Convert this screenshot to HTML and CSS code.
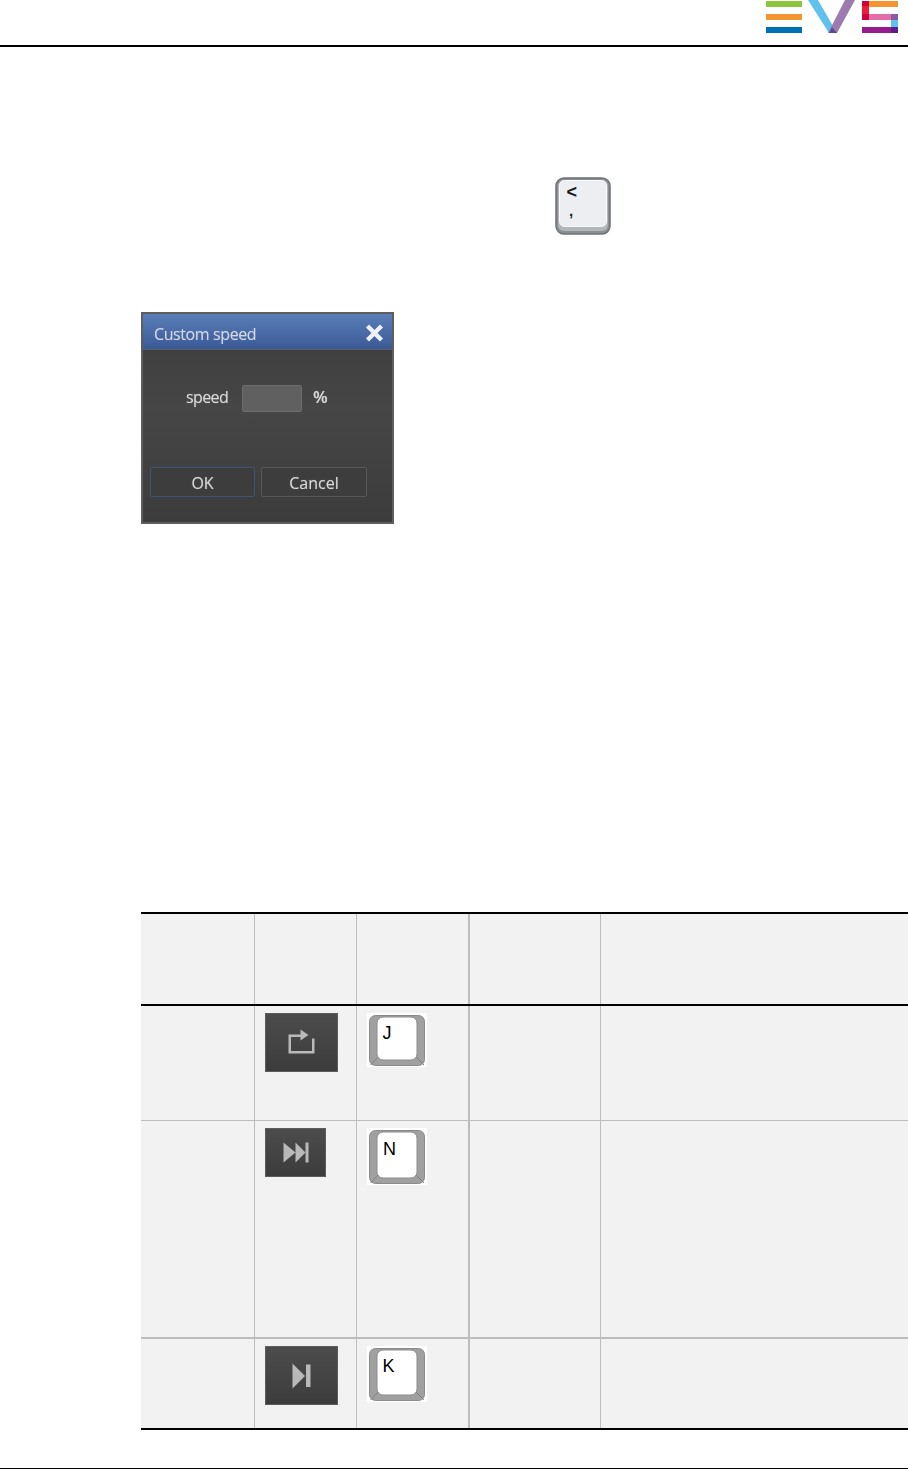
FILE: index.html
```html
<!DOCTYPE html>
<html lang="en">
<head>
<meta charset="utf-8">
<title>Custom speed</title>
<link rel="stylesheet" href="styles.css">
</head>
<body>
<header class="top">
  <svg class="logo" width="132" height="34" viewBox="0 0 132 34" aria-label="EVS">
    <rect x="0" y="1" width="36" height="6" fill="#8cc63f"/>
    <rect x="0" y="14" width="36" height="6" fill="#f39530"/>
    <rect x="0" y="27" width="36" height="6" fill="#006fb3"/>
    <path d="M42 0h10l19 33h-8z" fill="#5fc1ee"/>
    <path d="M79 0h10L71 33h-9z" fill="#9c7bb1"/>
    <path d="M66 27l5 6h-8z" fill="#5b4a93"/>
    <rect x="96" y="1" width="7" height="19" fill="#ee1c3c"/>
    <rect x="96" y="1" width="7" height="5" fill="#d2003c"/>
    <rect x="96" y="14" width="7" height="6" fill="#d2003c"/>
    <rect x="103" y="1" width="29" height="6" fill="#f39530"/>
    <rect x="103" y="14" width="22" height="6" fill="#e46fa8"/>
    <rect x="125" y="14" width="7" height="6" fill="#8a5ca0"/>
    <rect x="125" y="20" width="7" height="7" fill="#5fc1ee"/>
    <rect x="96" y="27" width="29" height="6" fill="#951b8f"/>
    <rect x="125" y="27" width="7" height="6" fill="#5b1f85"/>
  </svg>
</header>

<main class="page">
  <svg class="bigkey" width="56" height="58" viewBox="0 0 56 58">
    <rect x="1" y="1" width="54" height="56" rx="8" fill="#8b8f92" stroke="#6f7375" stroke-width="1.500"/>
    <rect x="3" y="3" width="50" height="51" rx="6" fill="#b4b7b9"/>
    <rect x="4.500" y="3.500" width="47" height="46" rx="5" fill="#eceef2" stroke="#f8f9fa"/>
    <text class="bigkey-lt" x="11.500" y="21">&lt;</text>
    <text class="bigkey-comma" x="14" y="39">,</text>
  </svg>

  <section class="dialog">
    <div class="dialog-title">
      <span class="dialog-name">Custom speed</span>
      <svg class="dialog-x" width="19" height="18" viewBox="0 0 19 18"><path d="M2.500 2l14 14M16.500 2l-14 14" stroke="#eef1f5" stroke-width="4.400" fill="none"/></svg>
    </div>
    <div class="dialog-body">
      <div class="field">
        <span class="field-label">speed</span>
        <span class="field-input"></span>
        <span class="field-unit">%</span>
      </div>
      <div class="actions">
        <span class="btn btn-ok"><span class="btn-text">OK</span></span>
        <span class="btn"><span class="btn-text">Cancel</span></span>
      </div>
    </div>
  </section>

  <section class="table">
    <div class="row row-head">
      <div class="cell"></div><div class="cell"></div><div class="cell cell-thick"></div><div class="cell"></div><div class="cell cell-last"></div>
    </div>
    <div class="row row-one">
      <div class="cell"></div>
      <div class="cell"><span class="tool tool-wide">
        <svg width="30" height="30" viewBox="0 0 30 30"><path d="M14 7.750H2.750v16.500h23.500V10.500" fill="none" stroke="#b9b9b9" stroke-width="2.500"/><path d="M13.500 1.500l8 5.500-8 5.500z" fill="#b9b9b9"/></svg>
      </span></div>
      <div class="cell cell-thick cell-key">
        <svg class="key" width="60" height="54" viewBox="0 0 60 54">
          <rect width="60" height="54" fill="#fff"/>
          <rect x="2.500" y="2.500" width="55" height="50" rx="6" fill="#a0a0a0" stroke="#8a8a8a"/>
          <path d="M12 43L3.500 52M48 43l9 9" stroke="#808080"/>
          <rect x="10" y="4" width="40" height="43" rx="6" fill="#fff" stroke="#8c8c8c"/>
          <text class="key-text" x="15.500" y="26">J</text>
        </svg>
      </div>
      <div class="cell"></div><div class="cell cell-last"></div>
    </div>
    <div class="row row-two">
      <div class="cell"></div>
      <div class="cell"><span class="tool tool-narrow">
        <svg width="30" height="24" viewBox="0 0 30 24"><path d="M2.500 1.500L14.500 11.500 2.500 21.500zM14.500 1.500L24.500 11.500 14.500 21.500z" fill="#b9b9b9"/><rect x="24.500" y="1.500" width="3" height="20" fill="#b9b9b9"/></svg>
      </span></div>
      <div class="cell cell-thick cell-key">
        <svg class="key" width="60" height="57" viewBox="0 0 60 57">
          <rect width="60" height="57" fill="#fff"/>
          <rect x="2.500" y="2.500" width="55" height="53" rx="6" fill="#a0a0a0" stroke="#8a8a8a"/>
          <path d="M12 46L3.500 55M48 46l9 9" stroke="#808080"/>
          <rect x="10" y="4" width="40" height="46" rx="6" fill="#fff" stroke="#8c8c8c"/>
          <text class="key-text" x="16" y="27">N</text>
        </svg>
      </div>
      <div class="cell"></div><div class="cell cell-last"></div>
    </div>
    <div class="row row-three">
      <div class="cell"></div>
      <div class="cell"><span class="tool tool-wide">
        <svg width="30" height="30" viewBox="0 0 30 30"><path d="M5.500 2.500L18 15 5.500 27.500z" fill="#b9b9b9"/><rect x="19" y="3.500" width="4.500" height="22.500" fill="#b9b9b9"/></svg>
      </span></div>
      <div class="cell cell-thick cell-key">
        <svg class="key" width="60" height="56" viewBox="0 0 60 56">
          <rect width="60" height="56" fill="#fff"/>
          <rect x="2.500" y="2.500" width="55" height="52" rx="6" fill="#a0a0a0" stroke="#8a8a8a"/>
          <path d="M12 45L3.500 54M48 45l9 9" stroke="#808080"/>
          <rect x="10" y="4" width="40" height="45" rx="6" fill="#fff" stroke="#8c8c8c"/>
          <text class="key-text" x="15.500" y="26">K</text>
        </svg>
      </div>
      <div class="cell"></div><div class="cell cell-last"></div>
    </div>
  </section>
</main>

<footer class="bottom"></footer>
</body>
</html>
```

FILE: styles.css
```css
* { box-sizing: border-box; }
html, body { margin: 0; padding: 0; background: #fff; }
body { width: 908px; height: 1469px; overflow: hidden; font-family: "Liberation Sans", Arial, sans-serif; }

.top { height: 47px; border-bottom: 2px solid #000; display: flex; justify-content: flex-end; padding-right: 10px; }
.logo { display: block; }

.page { padding-left: 141px; }
.bigkey { display: block; margin: 130px 0 0 414px; }
.bigkey-lt { font: bold 18px "Liberation Sans", sans-serif; fill: #1c1c1c; }
.bigkey-comma { font: bold 15px "Liberation Sans", sans-serif; fill: #222; }

.dialog { width: 253px; height: 212px; margin-top: 77px; border: 2px solid #5e5e5e; background: linear-gradient(#3c3c3c, #464646 45%, #3c3c3c); display: flex; flex-direction: column; color: #d8d8d8; font-family: "Open Sans", sans-serif; text-shadow: 0 0 1px rgba(216, 216, 216, 0.5); }
.dialog-title { height: 36px; padding: 2px 8px 0 11px; display: flex; align-items: center; justify-content: space-between; background: linear-gradient(#5a7db8, #3a5a96); border-bottom: 1px solid #5b5f66; font-size: 16px; letter-spacing: -0.400px; color: #cfd8e6; }
.dialog-name { margin-top: 2px; filter: blur(0.4px); }
.dialog-x { filter: blur(0.3px); }
.dialog-body { flex: 1; display: flex; flex-direction: column; padding: 35px 0 0 7px; }
.field { display: flex; align-items: center; height: 27px; padding-left: 36px; font-size: 16px; letter-spacing: -0.600px; }
.field-label { width: 56px; padding-bottom: 4px; filter: blur(0.4px); }
.field-input { width: 60px; height: 27px; background: #606060; border: 1px solid #6c6c6c; border-radius: 2px; }
.field-unit { margin-left: 11px; padding-bottom: 4px; font-size: 17px; font-weight: 600; letter-spacing: 0; filter: blur(0.4px); }
.actions { display: flex; gap: 6px; margin-top: 55px; }
.btn { width: 106px; height: 30px; display: flex; align-items: center; justify-content: center; background: #3d3d3d; border: 1px solid #585858; border-radius: 2px; font-size: 16px; }
.btn-ok { width: 105px; border-color: #3f5474; }
.btn-text { margin-top: 1px; filter: blur(0.4px); }

.table { width: 767px; margin-top: 388px; border-top: 2px solid #000; border-bottom: 2px solid #000; }
.row { display: grid; grid-template-columns: 114px 102px 113px 131px 1fr; background: #f2f2f2; }
.row-head { height: 92px; border-bottom: 2px solid #000; }
.row-one { height: 115px; border-bottom: 1px solid #bdbdbd; }
.row-two { height: 218px; border-bottom: 2px solid #bdbdbd; }
.row-three { height: 89px; }
.cell { border-right: 1px solid #bdbdbd; padding-top: 7px; }
.cell-thick { border-right: 2px solid #bdbdbd; }
.cell-last { border-right: 0; }
.cell-key { padding-left: 10px; }
.key { display: block; }
.key-text { font: 18px "Liberation Sans", sans-serif; fill: #000; }

.tool { margin-left: 10px; display: flex; align-items: center; justify-content: center; background: linear-gradient(#4c4c4c, #3c3c3c); border: 1px solid #5c5c5c; }
.tool-wide { width: 73px; height: 59px; }
.tool-narrow { width: 61px; height: 49px; }

.bottom { margin-top: 38px; border-top: 1px solid #000; }
```
